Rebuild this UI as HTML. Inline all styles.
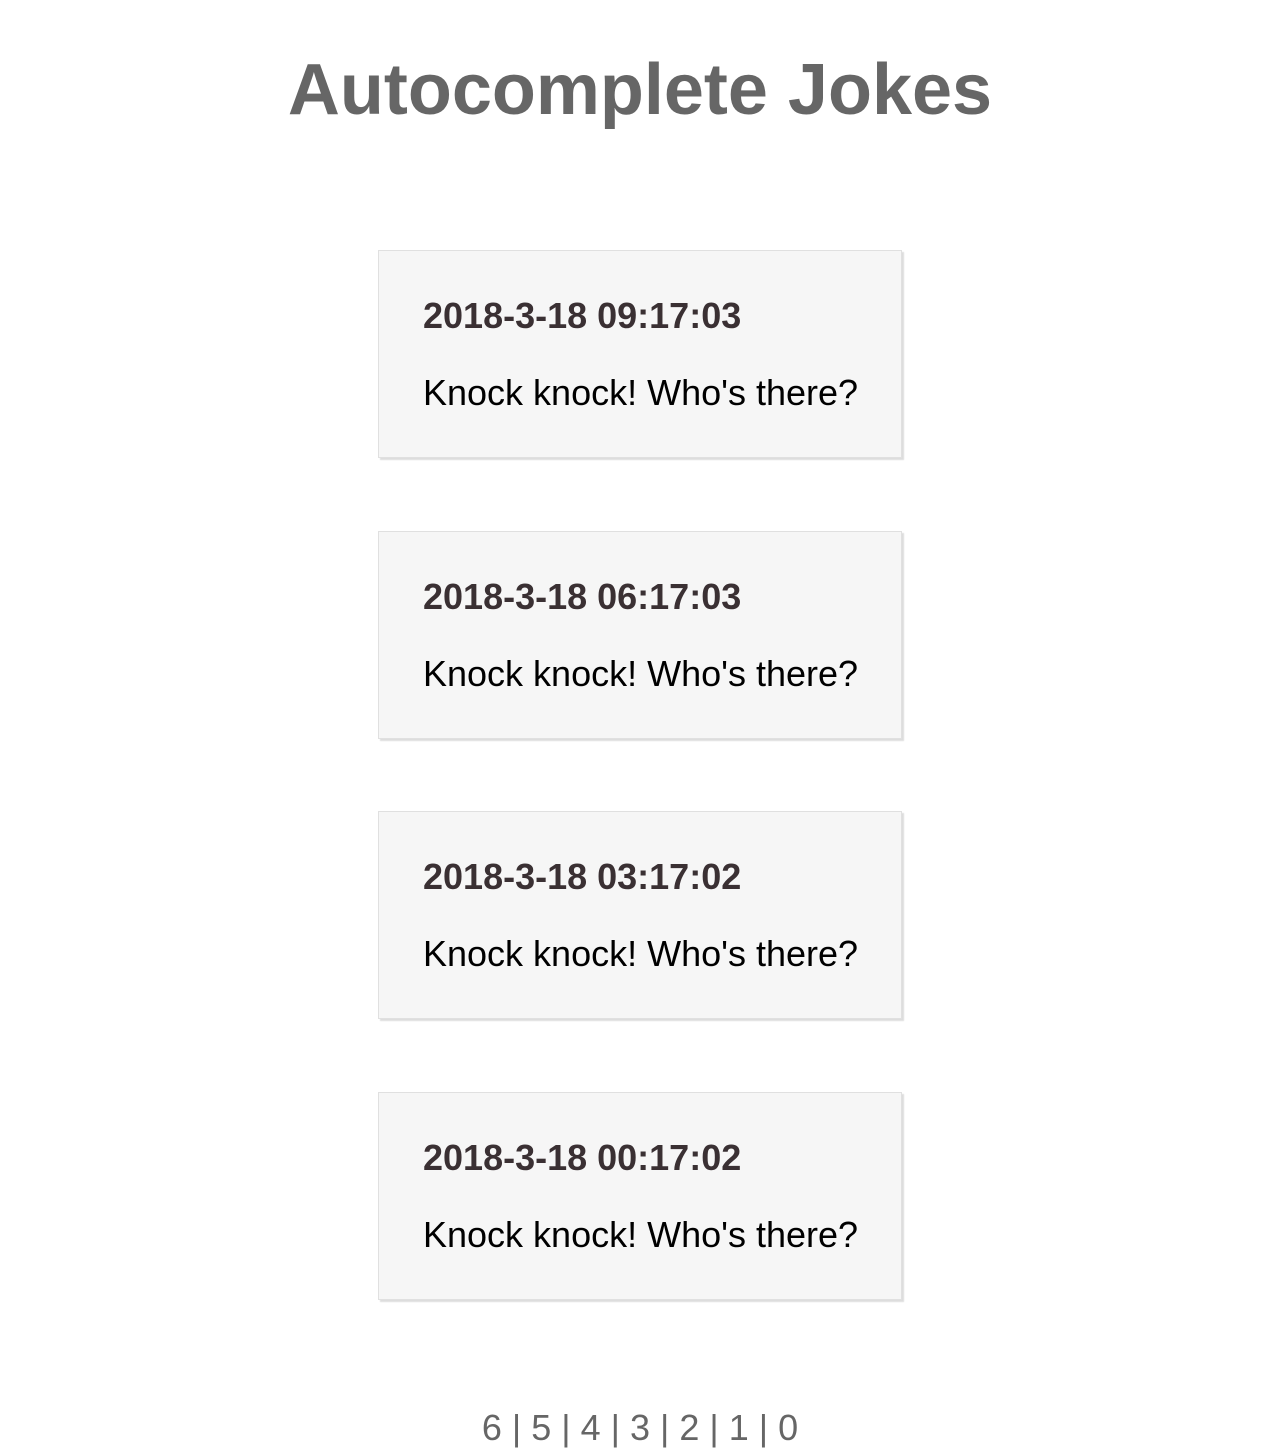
<!DOCTYPE html>
<html><head><meta charset="utf-8"><style>
body{margin:0;width:1280px;height:1450px;background:#fff;font-family:"Liberation Sans",sans-serif;position:relative;overflow:hidden}
h1{position:absolute;top:48px;left:0;width:1280px;margin:0;text-align:center;font-size:72px;font-weight:bold;color:#666;line-height:84px}
.card{position:absolute;left:378px;width:522px;height:206px;background:#f6f6f6;border:1px solid #e0e0e0;box-shadow:2px 2px 1px #ddd}
.d{position:absolute;left:44px;top:45px;font-size:36px;font-weight:bold;color:#3a3033;line-height:40px;white-space:nowrap}
.t{position:absolute;left:44px;top:122px;font-size:36px;color:#000;line-height:40px;white-space:nowrap}
.p{position:absolute;top:1407px;left:0;width:1280px;text-align:center;font-size:36px;color:#666;line-height:42px}
</style></head><body>
<h1>Autocomplete Jokes</h1>
<div class="card" style="top:250px"><div class="d">2018-3-18 09:17:03</div><div class="t">Knock knock! Who's there?</div></div>
<div class="card" style="top:531px"><div class="d">2018-3-18 06:17:03</div><div class="t">Knock knock! Who's there?</div></div>
<div class="card" style="top:811px"><div class="d">2018-3-18 03:17:02</div><div class="t">Knock knock! Who's there?</div></div>
<div class="card" style="top:1092px"><div class="d">2018-3-18 00:17:02</div><div class="t">Knock knock! Who's there?</div></div>
<div class="p">6 | 5 | 4 | 3 | 2 | 1 | 0</div>
</body></html>
